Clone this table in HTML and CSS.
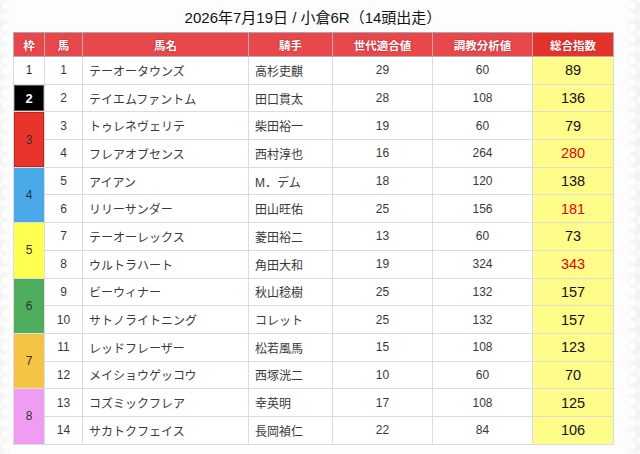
FILE: index.html
```html
<!DOCTYPE html>
<html lang="ja">
<head>
<meta charset="utf-8">
<link rel="stylesheet" href="styles.css">
</head>
<body>
<div class="page">
  <h1 class="title">2026年7月19日 / 小倉6R（14頭出走）</h1>
  <table class="race">
    <colgroup>
      <col class="c-waku"><col class="c-uma"><col class="c-name"><col class="c-jockey"><col class="c-gen"><col class="c-train"><col class="c-total">
    </colgroup>
    <thead>
      <tr>
        <th>枠</th><th>馬</th><th>馬名</th><th>騎手</th><th>世代適合値</th><th>調教分析値</th><th class="th-total">総合指数</th>
      </tr>
    </thead>
    <tbody>
      <tr><td class="waku w1">1</td><td class="num">1</td><td class="name">テーオータウンズ</td><td class="name">高杉吏麒</td><td class="num">29</td><td class="num">60</td><td class="total">89</td></tr>
      <tr><td class="waku w2">2</td><td class="num">2</td><td class="name">テイエムファントム</td><td class="name">田口貫太</td><td class="num">28</td><td class="num">108</td><td class="total">136</td></tr>
      <tr><td class="waku w3" rowspan="2">3</td><td class="num">3</td><td class="name">トゥレネヴェリテ</td><td class="name">柴田裕一</td><td class="num">19</td><td class="num">60</td><td class="total">79</td></tr>
      <tr><td class="num">4</td><td class="name">フレアオブセンス</td><td class="name">西村淳也</td><td class="num">16</td><td class="num">264</td><td class="total hi">280</td></tr>
      <tr><td class="waku w4" rowspan="2">4</td><td class="num">5</td><td class="name">アイアン</td><td class="name">M．デム</td><td class="num">18</td><td class="num">120</td><td class="total">138</td></tr>
      <tr><td class="num">6</td><td class="name">リリーサンダー</td><td class="name">田山旺佑</td><td class="num">25</td><td class="num">156</td><td class="total hi">181</td></tr>
      <tr><td class="waku w5" rowspan="2">5</td><td class="num">7</td><td class="name">テーオーレックス</td><td class="name">菱田裕二</td><td class="num">13</td><td class="num">60</td><td class="total">73</td></tr>
      <tr><td class="num">8</td><td class="name">ウルトラハート</td><td class="name">角田大和</td><td class="num">19</td><td class="num">324</td><td class="total hi">343</td></tr>
      <tr><td class="waku w6" rowspan="2">6</td><td class="num">9</td><td class="name">ビーウィナー</td><td class="name">秋山稔樹</td><td class="num">25</td><td class="num">132</td><td class="total">157</td></tr>
      <tr><td class="num">10</td><td class="name">サトノライトニング</td><td class="name">コレット</td><td class="num">25</td><td class="num">132</td><td class="total">157</td></tr>
      <tr><td class="waku w7" rowspan="2">7</td><td class="num">11</td><td class="name">レッドフレーザー</td><td class="name">松若風馬</td><td class="num">15</td><td class="num">108</td><td class="total">123</td></tr>
      <tr><td class="num">12</td><td class="name">メイショウゲッコウ</td><td class="name">西塚洸二</td><td class="num">10</td><td class="num">60</td><td class="total">70</td></tr>
      <tr><td class="waku w8" rowspan="2">8</td><td class="num">13</td><td class="name">コズミックフレア</td><td class="name">幸英明</td><td class="num">17</td><td class="num">108</td><td class="total">125</td></tr>
      <tr><td class="num">14</td><td class="name">サカトクフェイス</td><td class="name">長岡禎仁</td><td class="num">22</td><td class="num">84</td><td class="total">106</td></tr>
    </tbody>
  </table>
</div>
</body>
</html>
```

FILE: styles.css
```css
html, body {
  margin: 0;
  padding: 0;
}
body {
  width: 640px;
  height: 454px;
  overflow: hidden;
  background-color: #f2f2f2;
  background-image:
    radial-gradient(circle at 50% 50%, #ffffff 0 3px, transparent 4px),
    radial-gradient(circle at 50% 50%, #fafafa 0 5px, transparent 6px);
  background-size: 11px 11px, 17px 17px;
  background-position: 0 0, 5px 7px;
  font-family: "Liberation Sans", "Noto Sans CJK JP", sans-serif;
  color: #333;
}
.page {
  margin: 0 14px 0 10px;
  padding-left: 3px;
  height: 454px;
  background: #fdfdfd;
  box-shadow: 0 0 10px 6px rgba(253, 253, 253, 0.9);
  display: flex;
  flex-direction: column;
  align-items: flex-start;
}
.title {
  margin: 0;
  padding-top: 8px;
  height: 24px;
  line-height: 20px;
  font-size: 15px;
  font-weight: normal;
  color: #111;
  text-align: center;
  width: 600px;
}
.race {
  border-collapse: collapse;
  table-layout: fixed;
  width: 600px;
  background: #fff;
  border: 1px solid #dcdcdc;
}
.c-waku { width: 31px; }
.c-uma { width: 38px; }
.c-name { width: 166px; }
.c-jockey { width: 84px; }
.c-gen { width: 100px; }
.c-train { width: 100px; }
.c-total { width: 81px; }

.race th {
  height: 23px;
  padding: 0;
  background: #e8474b;
  color: #fff;
  font-size: 11.5px;
  font-weight: bold;
  border: 1px solid #b0b0b0;
  border-top-color: #a8a8a8;
  text-shadow: 0 0 2px #b51c1c;
}
.race th.th-total {
  background: #e5322a;
}
.race td {
  height: 26.7px;
  padding: 0;
  border: 1px solid #dcdcdc;
  font-size: 12px;
  color: #3a3a3a;
}
.race td.num {
  text-align: center;
}
.race td.name {
  padding-left: 6px;
  text-align: left;
}
.race td.total {
  text-align: center;
  background: #fffd8a;
  font-size: 14.5px;
  color: #111;
}
.race td.total.hi {
  color: #ee0000;
}
.race td.waku {
  text-align: center;
  color: #333;
}
.w1 { background: #ffffff; }
.race td.w2 {
  background: #000;
  color: #fff;
  font-weight: bold;
  font-size: 13px;
  box-shadow: inset 0 0 0 1px #555;
}
.race td.w3 { background: #e8342a; box-shadow: inset 0 0 0 1px #c9221a; }
.race td.w4 { background: #4aa9e9; }
.race td.w5 { background: #ffff4f; }
.race td.w6 { background: #4fae5d; }
.race td.w7 { background: #f5c445; }
.race td.w8 { background: #ef9df3; }
```
